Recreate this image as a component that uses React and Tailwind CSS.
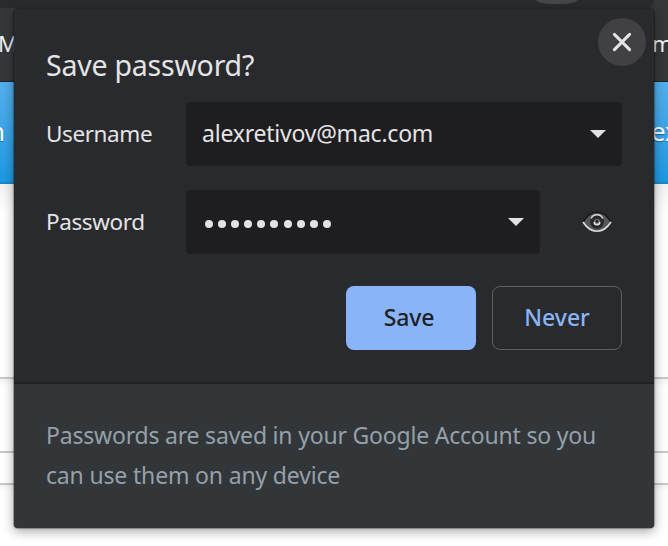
const Caret = () => (
  <svg className="block h-2 w-4" viewBox="0 0 16 8" fill="#e2e2e3">
    <path d="M0 0h16L8 8z" />
  </svg>
);

const CloseIcon = () => (
  <svg className="block size-6" viewBox="0 0 24 24" fill="none" stroke="#e5e5e6" strokeWidth="3" strokeLinecap="round">
    <path d="M4.4 4.4l15.2 15.2M19.6 4.4L4.4 19.6" />
  </svg>
);

const EyeIcon = () => (
  <svg className="block h-[22px] w-[30px]" viewBox="0 0 30 22" fill="none">
    <path d="M1 11Q7 1.5 15 1.5T29 11Q22 20 15 20T1 11Z" fill="#55565a" />
    <path d="M1 11Q7 1.2 15 1.2T29 11" stroke="#161618" strokeWidth="1.4" />
    <path d="M1 11Q7 20.2 15 20.2T29 11" stroke="#dededf" strokeWidth="1.6" />
    <circle cx="15" cy="10.7" r="7" fill="#29292b" />
    <path d="M9.2 7.5a6.4 6.4 0 0 1 11.6 0" stroke="#d7d7d8" strokeWidth="1.5" />
    <circle cx="15" cy="11" r="3" fill="#77787a" />
    <path d="M12.2 11a2.8 2.8 0 0 0 5.6 0" stroke="#e2e2e3" strokeWidth="1.5" />
    <circle cx="15" cy="10.4" r="1.4" fill="#202022" />
  </svg>
);

function Backdrop() {
  return (
    <div className="flex h-[546px] flex-col">
      <div className="flex h-[82px] flex-col border-b border-[#202427] bg-[#35383b]">
        <div className="flex h-2 w-[654px] shrink-0 justify-end overflow-hidden rounded-br-[20px] bg-[#282c2f] pr-[65px]">
          <div className="-mt-11 h-12 w-16 rounded-[24px] bg-[#45474a]" />
        </div>
        <div className="flex h-[70px] items-center justify-between text-[22px] leading-none text-[#f1f1f2]">
          <span className="-ml-0.5">M</span>
          <span className="w-4 whitespace-nowrap">mi</span>
        </div>
      </div>
      <div className="flex h-[102px] items-center justify-between border-b-2 border-[#1b87ca] bg-linear-to-b from-[#52b0ec] to-[#1b98e3] pb-0.5 text-[26px] leading-none text-white [text-shadow:0_1px_1px_#176aa6]">
        <span className="flex w-[5px] justify-end">n</span>
        <span className="w-[17px] tracking-[-0.5px] whitespace-nowrap">ex</span>
      </div>
      <div className="h-[195px] border-b-2 border-[#c8c8c8] bg-linear-to-b from-[#f3f3f3] to-white to-15%" />
      <div className="h-[74px] border-b-2 border-[#c8c8c8] bg-linear-to-b from-[#f3f3f3] to-white to-10%" />
      <div className="h-8 border-b-2 border-[#c8c8c8]" />
      <div className="flex-1 bg-linear-to-b from-[#f5f5f5] to-white to-10%" />
    </div>
  );
}

export default function App() {
  return (
    <div className="relative h-[546px] w-[668px] overflow-hidden bg-white font-['Noto_Sans',sans-serif]">
      <Backdrop />
      <div className="absolute top-[9px] left-[14px] flex h-[519px] w-[640px] flex-col overflow-hidden rounded bg-[#292a2d] text-[#e4e4e6] shadow-[0_0_1px_1px_rgba(0,0,0,0.3),0_3px_12px_rgba(0,0,0,0.38)]">
        <div className="flex h-[93px] justify-between pr-2 pl-8">
          <h1 className="mt-9 h-10 text-[28.5px] leading-10 tracking-[-0.22px] whitespace-nowrap">Save password?</h1>
          <button className="mt-[9px] flex size-12 items-center justify-center rounded-full bg-[#414145]">
            <CloseIcon />
          </button>
        </div>
        <div className="flex h-16 items-center pl-8">
          <label className="w-[140px] text-[22.5px] tracking-[-0.4px]">Username</label>
          <div className="flex h-16 w-[436px] items-center justify-between rounded bg-[#1e1e20] px-4">
            <span className="pb-0.5 text-[23px] tracking-[-0.22px]">alexretivov@mac.com</span>
            <Caret />
          </div>
        </div>
        <div className="mt-6 flex h-16 items-center pl-8">
          <label className="w-[140px] text-[22.5px] tracking-[-0.4px]">Password</label>
          <div className="flex h-16 w-[354px] items-center justify-between rounded bg-[#1e1e20] pr-4 pl-[18.5px]">
            <div className="flex gap-[5.2px] pt-[3px]">
              {Array.from({ length: 10 }, (_, i) => (
                <i key={i} className="size-[8px] rounded-full bg-[#e2e2e3]" />
              ))}
            </div>
            <Caret />
          </div>
          <button className="ml-[42px]">
            <EyeIcon />
          </button>
        </div>
        <div className="mt-8 flex h-16 justify-end gap-4 pr-8 text-[23px] font-medium">
          <button className="w-[130px] rounded-lg bg-[#8ab4f8] pr-1 pb-0.5 tracking-[-0.2px] text-[#202124]">Save</button>
          <button className="w-[130px] rounded-lg border border-[#5f6064] pb-0.5 text-[#8ab4f8]">Never</button>
        </div>
        <div className="mt-8 flex-1 border-t-2 border-[#212225] bg-[#323639] px-8 pt-[31px] text-[23px] leading-10 whitespace-nowrap text-[#95a0a9]">
          <p className="tracking-[-0.2px]">Passwords are saved in your Google Account so you</p>
          <p className="tracking-[-0.17px]">can use them on any device</p>
        </div>
      </div>
    </div>
  );
}
